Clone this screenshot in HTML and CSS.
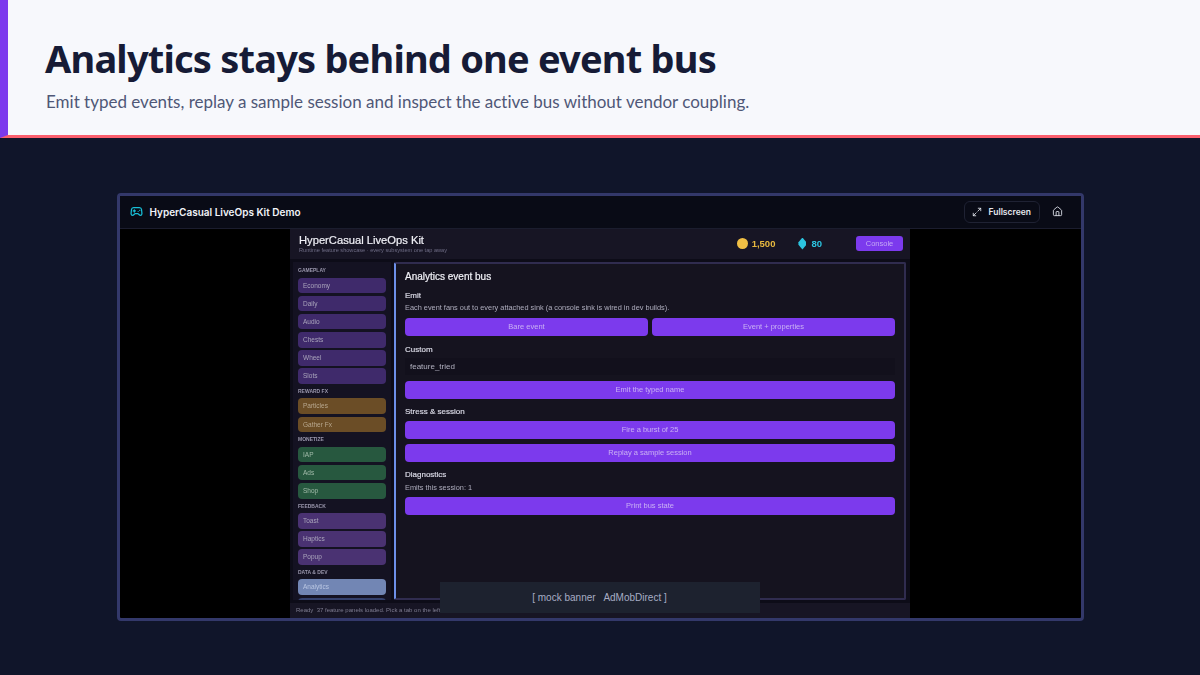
FILE: index.html
```html
<!DOCTYPE html>
<html>
<head>
  <meta charset="UTF-8">
  <title>Analytics stays behind one event bus</title>
  <link rel="stylesheet" href="styles.css">
</head>
<body>
  <header class="slide-head">
    <h1>Analytics stays behind one event bus</h1>
    <p>Emit typed events, replay a sample session and inspect the active bus without vendor coupling.</p>
  </header>

  <main class="stage">
    <div class="frame">
      <div class="topbar">
        <svg class="pad-icon" viewBox="0 0 24 24"><line x1="6" x2="10" y1="11" y2="11"/><line x1="8" x2="8" y1="9" y2="13"/><line x1="15" x2="15.01" y1="12" y2="12"/><line x1="18" x2="18.01" y1="10" y2="10"/><path d="M17.32 5H6.68a4 4 0 0 0-3.978 3.59c-.006.052-.01.101-.017.152C2.604 9.416 2 14.456 2 16a3 3 0 0 0 3 3c1 0 1.5-.5 2-1l1.414-1.414A2 2 0 0 1 9.828 16h4.344a2 2 0 0 1 1.414.586L17 18c.5.5 1 1 2 1a3 3 0 0 0 3-3c0-1.545-.604-6.584-.685-7.258-.007-.05-.011-.1-.017-.151A4 4 0 0 0 17.32 5z"/></svg>
        <span class="topbar-title">HyperCasual LiveOps Kit Demo</span>
        <div class="fullscreen">
          <svg viewBox="0 0 24 24"><polyline points="15 3 21 3 21 9"/><polyline points="9 21 3 21 3 15"/><line x1="21" y1="3" x2="14" y2="10"/><line x1="3" y1="21" x2="10" y2="14"/></svg>
          Fullscreen
        </div>
        <svg class="home-icon" viewBox="0 0 24 24"><path d="M15 21v-8a1 1 0 0 0-1-1h-4a1 1 0 0 0-1 1v8"/><path d="M3 10a2 2 0 0 1 .709-1.528l7-5.999a2 2 0 0 1 2.582 0l7 5.999A2 2 0 0 1 21 10v9a2 2 0 0 1-2 2H5a2 2 0 0 1-2-2z"/></svg>
      </div>

      <div class="game">
        <div class="app">
          <div class="app-head">
            <div class="app-brand">
              <div class="app-title">HyperCasual LiveOps Kit</div>
              <div class="app-sub">Runtime feature showcase · every subsystem one tap away</div>
            </div>
            <div class="wallet coins"><span class="coin"></span>1,500</div>
            <div class="wallet gems"><span class="gem"></span>80</div>
            <div class="console-btn">Console</div>
          </div>

          <div class="app-body">
            <nav class="sidebar">
              <div class="group">GAMEPLAY</div>
              <div class="tab play">Economy</div>
              <div class="tab play">Daily</div>
              <div class="tab play">Audio</div>
              <div class="tab play">Chests</div>
              <div class="tab play">Wheel</div>
              <div class="tab play">Slots</div>
              <div class="group">REWARD FX</div>
              <div class="tab fx">Particles</div>
              <div class="tab fx">Gather Fx</div>
              <div class="group">MONETIZE</div>
              <div class="tab money">IAP</div>
              <div class="tab money">Ads</div>
              <div class="tab money">Shop</div>
              <div class="group">FEEDBACK</div>
              <div class="tab feedback">Toast</div>
              <div class="tab feedback">Haptics</div>
              <div class="tab feedback">Popup</div>
              <div class="group">DATA &amp; DEV</div>
              <div class="tab active">Analytics</div>
              <div class="tab data"></div>
            </nav>

            <section class="panel">
              <h2>Analytics event bus</h2>
              <h3>Emit</h3>
              <p>Each event fans out to every attached sink (a console sink is wired in dev builds).</p>
              <div class="btn-row">
                <div class="btn">Bare event</div>
                <div class="btn">Event + properties</div>
              </div>
              <h3 class="gap-custom">Custom</h3>
              <div class="field">feature_tried</div>
              <div class="btn">Emit the typed name</div>
              <h3>Stress &amp; session</h3>
              <div class="btn">Fire a burst of 25</div>
              <div class="btn btn-next">Replay a sample session</div>
              <h3>Diagnostics</h3>
              <p class="count">Emits this session: 1</p>
              <div class="btn">Print bus state</div>
            </section>
          </div>

          <div class="status">Ready&nbsp; 37 feature panels loaded. Pick a tab on the left to begin.</div>
        </div>
        <div class="banner">[ mock banner &nbsp; AdMobDirect ]</div>
      </div>
    </div>
  </main>
</body>
</html>
```

FILE: styles.css
```css
* {
  margin: 0;
  padding: 0;
  box-sizing: border-box;
}

body {
  width: 1200px;
  height: 675px;
  overflow: hidden;
  display: flex;
  flex-direction: column;
  background: #10152a;
  font-family: "Liberation Sans", sans-serif;
}

.slide-head {
  height: 138px;
  padding: 36px 0 0 37px;
  background: #f7f8fc;
  border-left: 8px solid #7c3aed;
  border-bottom: 3px solid #fb5f6e;
}

.slide-head h1 {
  font-family: "Noto Sans", sans-serif;
  font-size: 38px;
  line-height: 44px;
  font-weight: 700;
  letter-spacing: -0.8px;
  color: #161b36;
}

.slide-head p {
  margin-top: 11px;
  padding-left: 1px;
  font-family: Lato, sans-serif;
  font-variant-ligatures: none;
  font-size: 17px;
  line-height: 22px;
  color: #4f5777;
}

.stage {
  flex: 1;
  display: flex;
  align-items: center;
  justify-content: center;
}

.frame {
  width: 967px;
  height: 428px;
  display: flex;
  flex-direction: column;
  border: 3px solid #33386a;
  border-radius: 4px;
  background: #000;
  overflow: hidden;
}

.topbar {
  height: 33px;
  flex: none;
  display: flex;
  align-items: center;
  padding: 0 18px 0 10px;
  background: #090b16;
  border-bottom: 1px solid #1b1d2e;
}

.topbar svg {
  fill: none;
  stroke-linecap: round;
  stroke-linejoin: round;
  stroke-width: 2;
}

.pad-icon {
  width: 13px;
  height: 13px;
  stroke: #18c0d8;
}

.topbar svg.pad-icon {
  stroke-width: 2.3;
}

.topbar-title {
  margin-left: 7px;
  font-family: Inter, sans-serif;
  font-size: 10px;
  font-weight: 600;
  color: #f1f3f8;
}

.fullscreen {
  margin-left: auto;
  width: 76px;
  height: 22px;
  padding-left: 7px;
  display: flex;
  align-items: center;
  gap: 7px;
  border: 1px solid #1f2233;
  border-radius: 6px;
  font-family: Inter, sans-serif;
  font-size: 8.5px;
  font-weight: 600;
  color: #e6e8ef;
}

.fullscreen svg {
  width: 10px;
  height: 10px;
  stroke: #e6e8ef;
}

.home-icon {
  width: 11px;
  height: 11px;
  margin-left: 12px;
  stroke: #d8dbe4;
}

.game {
  flex: 1;
  position: relative;
  display: flex;
  justify-content: center;
  overflow: hidden;
}

.app {
  width: 620px;
  display: flex;
  flex-direction: column;
  background: #0d0c18;
  filter: blur(0.4px);
}

.app-head {
  height: 30px;
  flex: none;
  display: flex;
  align-items: center;
  padding: 0 7px 0 9px;
  background: #171524;
}

.app-brand {
  flex: 1;
}

.app-title {
  font-size: 11.2px;
  line-height: 14px;
  color: #f0f0f6;
  -webkit-text-stroke: 0.2px #f0f0f6;
}

.app-sub {
  font-size: 5.6px;
  line-height: 7px;
  color: #6e6c85;
}

.wallet {
  display: flex;
  align-items: center;
  font-size: 9.5px;
  font-weight: 700;
}

.coins {
  gap: 4px;
  color: #e8b93f;
}

.coin {
  width: 11px;
  height: 11px;
  border-radius: 50%;
  background: #f0bf45;
}

.gems {
  margin-left: 23px;
  gap: 5px;
  color: #2cc4e0;
}

.gem {
  width: 8px;
  height: 12px;
  background: #2cc4e0;
  clip-path: polygon(50% 0, 100% 40%, 100% 60%, 50% 100%, 0 60%, 0 40%);
}

.console-btn {
  width: 47px;
  height: 15px;
  margin-left: 34px;
  display: flex;
  align-items: center;
  justify-content: center;
  border-radius: 3px;
  background: #7c3aed;
  font-size: 7.5px;
  color: #c4a8f5;
}

.app-body {
  flex: 1;
  min-height: 0;
  display: flex;
  padding: 3px 4px 3px 3px;
  gap: 3px;
}

.sidebar {
  width: 98px;
  padding: 0 5px;
  background: #141222;
  overflow: hidden;
}

.group {
  height: 7px;
  margin: 4px 0 3.5px;
  font-size: 5px;
  line-height: 7px;
  font-weight: 700;
  color: #9a97ad;
}

.group:first-child {
  margin: 5px 0 4px;
}

.tab {
  height: 15.5px;
  margin-bottom: 2.7px;
  padding-left: 5px;
  border-radius: 4px;
  font-size: 6.5px;
  line-height: 15.5px;
  color: #a9a4bb;
}

.play { background: #3f2a6b; }
.fx { background: #6b4d26; color: #b8a88f; }
.money { background: #27583f; color: #a2bbaa; }
.feedback { background: #4a3272; }
.active { background: #7286b4; color: #b9c6e2; }
.data { background: #34406c; }

.panel {
  flex: 1;
  padding: 6px 9px 0 9px;
  background: #15131f;
  border: 2px solid #302c4f;
  border-left: 2px solid #6d8fe8;
  border-radius: 2px;
}

.panel h2 {
  font-size: 10px;
  line-height: 14px;
  font-weight: 400;
  color: #f1f1f7;
  -webkit-text-stroke: 0.2px #f1f1f7;
}

.panel h3 {
  margin-top: 7px;
  font-size: 8px;
  line-height: 11px;
  font-weight: 400;
  color: #d8d8e4;
  -webkit-text-stroke: 0.2px #d8d8e4;
}

.panel h2 + h3 {
  margin-top: 6px;
}

.panel p {
  margin: 1px 0 5px;
  font-size: 7.36px;
  line-height: 11px;
  color: #aeadbd;
}

.panel p.count {
  margin: 2px 0 4px;
}

.btn-row {
  display: flex;
  gap: 4px;
}

.btn-row .btn {
  flex: 1;
}

.btn {
  height: 18px;
  display: flex;
  align-items: center;
  justify-content: center;
  border-radius: 4px;
  background: #7c3aed;
  font-size: 7.5px;
  color: #c9b0f3;
}

.btn-next {
  margin-top: 5px;
}

.panel h3 + .btn {
  margin-top: 4px;
}

.panel h3.gap-custom {
  margin-top: 8px;
}

.field {
  height: 17px;
  margin-top: 3px;
  margin-bottom: 6px;
  padding-left: 5px;
  font-size: 8px;
  line-height: 17px;
  color: #b2b1c0;
  background: #12101c;
}

.status {
  height: 15px;
  flex: none;
  padding-left: 6px;
  background: #171524;
  font-size: 6px;
  line-height: 14px;
  color: #7e7c90;
  white-space: nowrap;
  overflow: hidden;
}

.banner {
  position: absolute;
  left: 320px;
  bottom: 5px;
  width: 320px;
  height: 31px;
  display: flex;
  align-items: center;
  justify-content: center;
  background: #1d222f;
  font-size: 10px;
  color: #a7adc4;
  white-space: pre;
}
```
